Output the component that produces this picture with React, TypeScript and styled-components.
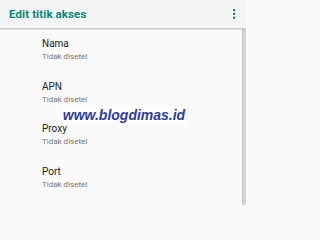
import React from 'react';
import styled, { createGlobalStyle } from 'styled-components';

const GlobalStyle = createGlobalStyle`
  html, body {
    margin: 0;
    padding: 0;
    background: #fafafa;
  }
  body {
    font-family: Roboto, "Liberation Sans", sans-serif;
  }
`;

const Screen = styled.div`
  position: relative;
  width: 246px;
  height: 205px;
  overflow: hidden;
  background: #fafafa;
  display: flex;
  flex-direction: column;
`;

const Toolbar = styled.div`
  position: relative;
  z-index: 1;
  height: 28px;
  flex-shrink: 0;
  display: flex;
  align-items: center;
  justify-content: space-between;
  padding: 0 10px 0 9px;
  background: #f5f5f5;
  box-shadow: 0 1px 2px rgba(0, 0, 0, 0.28);
`;

const Title = styled.h1`
  margin: 0;
  font-size: 11.5px;
  font-weight: 700;
  color: #00897b;
  letter-spacing: 0.1px;
`;

const Body = styled.div`
  flex: 1;
  display: flex;
`;

const List = styled.div`
  flex: 1;
  display: flex;
  flex-direction: column;
  padding-top: 10px;
`;

const Item = styled.div`
  height: 42.5px;
  padding-left: 42px;
  box-sizing: border-box;
`;

const ItemTitle = styled.div`
  font-size: 10px;
  line-height: 12px;
  color: #212121;
`;

const ItemValue = styled.div`
  margin-top: 1px;
  font-size: 8px;
  line-height: 12px;
  color: #757575;
`;

const Scrollbar = styled.div`
  width: 3px;
  margin-top: 1px;
  background: #d4d4d4;
  border-left: 1px solid #c4c4c4;
`;

const Watermark = styled.div`
  position: absolute;
  left: 62px;
  top: 106px;
  width: 124px;
  height: 18px;
  background: #ffffff;
  display: flex;
  align-items: center;
  justify-content: center;
  font-family: "Liberation Sans", Arial, sans-serif;
  font-size: 14px;
  font-weight: 700;
  font-style: italic;
  color: #2b3d9c;
`;

const KebabIcon = () => (
  <svg width="4" height="12" viewBox="0 0 4 12">
    <rect x="1" y="1" width="2.2" height="2.2" fill="#00897b" />
    <rect x="1" y="4.8" width="2.2" height="2.2" fill="#00897b" />
    <rect x="1" y="8.6" width="2.2" height="2.2" fill="#00897b" />
  </svg>
);

const fields = ['Nama', 'APN', 'Proxy', 'Port'];

const App: React.FC = () => (
  <>
    <GlobalStyle />
    <Screen>
      <Toolbar>
        <Title>Edit titik akses</Title>
        <KebabIcon />
      </Toolbar>
      <Body>
        <List>
          {fields.map(name => (
            <Item key={name}>
              <ItemTitle>{name}</ItemTitle>
              <ItemValue>Tidak disetel</ItemValue>
            </Item>
          ))}
        </List>
        <Scrollbar />
      </Body>
      <Watermark>www.blogdimas.id</Watermark>
    </Screen>
  </>
);

export default App;
